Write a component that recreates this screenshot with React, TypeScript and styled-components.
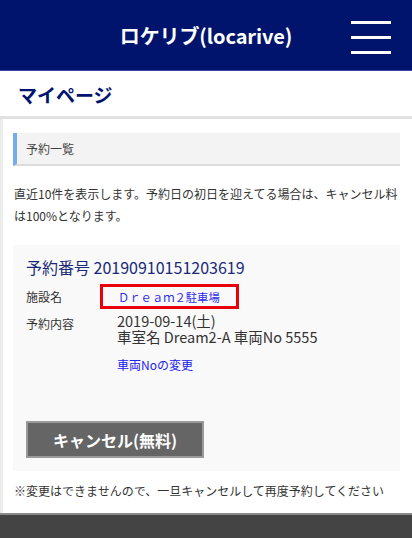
import React from 'react';
import styled, { createGlobalStyle } from 'styled-components';

const GlobalStyle = createGlobalStyle`
  html, body {
    margin: 0;
    padding: 0;
    background: #fff;
    font-family: "Noto Sans CJK JP", "Noto Sans", sans-serif;
    color: #333;
  }
`;

const Page = styled.div`
  width: 412px;
  min-height: 538px;
  display: flex;
  flex-direction: column;
`;

const Header = styled.header`
  height: 70px;
  background: #00146e;
  border-bottom: 1px solid #3848a0;
  display: flex;
  align-items: center;
  justify-content: center;
  position: relative;
`;

const Title = styled.h1`
  margin: 0;
  color: #fff;
  font-size: 20px;
  font-weight: bold;
  letter-spacing: -0.1px;
`;

const MenuButton = styled.div`
  position: absolute;
  right: 21px;
  top: 21px;
  width: 40px;
  display: flex;
  flex-direction: column;
  gap: 12px;
`;

const MenuLine = styled.span`
  display: block;
  height: 3px;
  background: #fff;
`;

const PageTitle = styled.div`
  height: 43px;
  padding-left: 18px;
  padding-top: 2px;
  display: flex;
  align-items: center;
  font-size: 19px;
  font-weight: bold;
  color: #00146e;
  border-bottom: 3px solid #e2e2e2;
`;

const Main = styled.main`
  border-left: 3px solid #ececec;
  padding: 14px 12px 14px 10px;
  display: flex;
  flex-direction: column;
`;

const SectionHeading = styled.div`
  height: 31px;
  background: #f3f3f3;
  border-left: 4px solid #74aee6;
  border-bottom: 2px solid #dcdcdc;
  padding-left: 9px;
  display: flex;
  align-items: center;
  font-size: 12px;
  color: #444;
`;

const Notice = styled.p`
  margin: 17px 0 18px 1px;
  font-size: 12px;
  line-height: 22px;
  color: #333;
`;

const Card = styled.div`
  background: #f9f9f9;
  padding: 10px 13px 13px;
`;

const ReserveNo = styled.div`
  font-size: 16px;
  color: #1a2a78;
  margin-bottom: 5px;
`;

const Row = styled.div`
  display: grid;
  grid-template-columns: 74px 1fr;
  align-items: start;
`;

const Label = styled.div<{ $pt?: number }>`
  font-size: 12px;
  color: #333;
  padding-top: ${(p) => p.$pt ?? 0}px;
`;

const FacilityBox = styled.div`
  justify-self: start;
  border: 3px solid #e8000b;
  padding: 0 16px 0 15px;
  height: 19px;
  display: flex;
  align-items: center;
  font-size: 11.3px;
  color: #2b2bf0;
`;

const Details = styled.div`
  padding-left: 17px;
  margin-top: 4px;
  display: flex;
  flex-direction: column;
  align-items: flex-start;
`;

const DetailLine = styled.div`
  font-size: 14.5px;
  line-height: 16px;
  color: #333;
`;

const ChangeLink = styled.a`
  display: inline-block;
  margin-top: 11px;
  font-size: 12px;
  color: #2020f0;
  text-decoration: none;
`;

const CancelButton = styled.button`
  margin-top: 48px;
  width: 178px;
  height: 37px;
  background: #656565;
  border: 2px solid #9a9a9a;
  color: #fff;
  font-family: inherit;
  font-size: 16px;
  font-weight: bold;
  padding: 0;
`;

const Note = styled.p`
  margin: 11px 0 0 1px;
  font-size: 12px;
  color: #333;
`;

const Footer = styled.footer`
  margin-top: auto;
  height: 24px;
  background: #444;
  border-top: 2px solid #8a8a8a;
`;

const App: React.FC = () => {
  return (
    <Page>
      <GlobalStyle />
      <Header>
        <Title>ロケリブ(locarive)</Title>
        <MenuButton>
          <MenuLine />
          <MenuLine />
          <MenuLine />
        </MenuButton>
      </Header>
      <PageTitle>マイページ</PageTitle>
      <Main>
        <SectionHeading>予約一覧</SectionHeading>
        <Notice>
          直近10件を表示します。予約日の初日を迎えてる場合は、キャンセル料は100%となります。
        </Notice>
        <Card>
          <ReserveNo>予約番号 20190910151203619</ReserveNo>
          <Row>
            <Label $pt={4}>施設名</Label>
            <FacilityBox>Ｄｒｅａｍ２駐車場</FacilityBox>
          </Row>
          <Row>
            <Label $pt={6}>予約内容</Label>
            <Details>
              <DetailLine>2019-09-14(土)</DetailLine>
              <DetailLine>車室名 Dream2-A 車両No 5555</DetailLine>
              <ChangeLink href="#">車両Noの変更</ChangeLink>
            </Details>
          </Row>
          <CancelButton>キャンセル(無料)</CancelButton>
        </Card>
        <Note>※変更はできませんので、一旦キャンセルして再度予約してください</Note>
      </Main>
      <Footer />
    </Page>
  );
};

export default App;
